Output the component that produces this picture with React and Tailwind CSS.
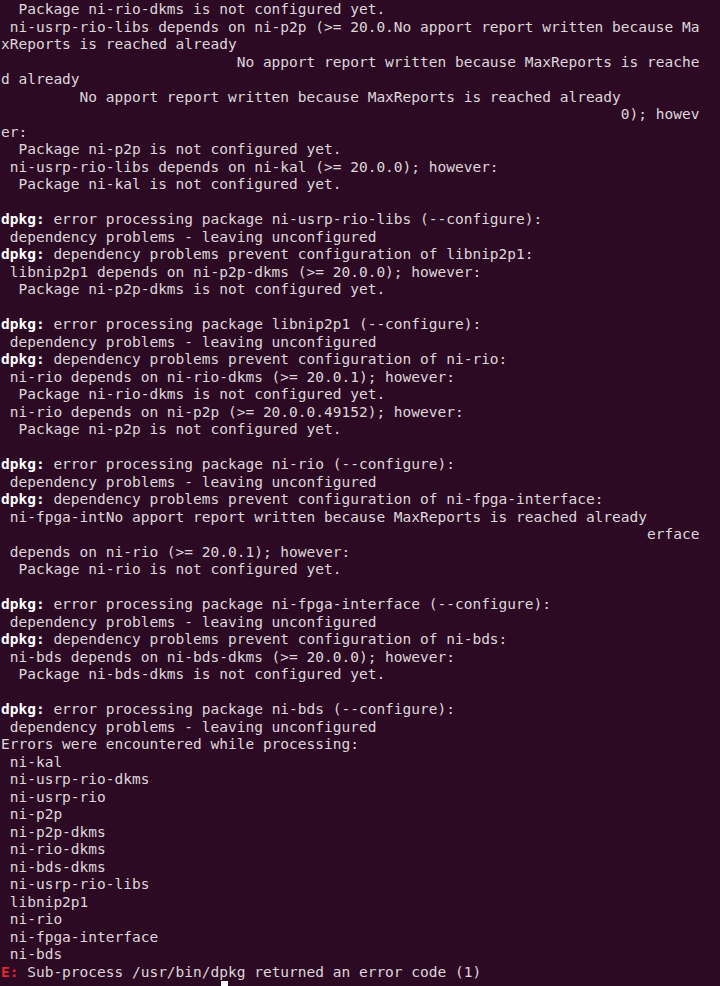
import React from 'react';

const LINES = [
  '  Package ni-rio-dkms is not configured yet.',
  ' ni-usrp-rio-libs depends on ni-p2p (>= 20.0.No apport report written because Ma',
  'xReports is reached already',
  '                           No apport report written because MaxReports is reache',
  'd already',
  '         No apport report written because MaxReports is reached already',
  '                                                                       0); howev',
  'er:',
  '  Package ni-p2p is not configured yet.',
  ' ni-usrp-rio-libs depends on ni-kal (>= 20.0.0); however:',
  '  Package ni-kal is not configured yet.',
  '',
  'dpkg: error processing package ni-usrp-rio-libs (--configure):',
  ' dependency problems - leaving unconfigured',
  'dpkg: dependency problems prevent configuration of libnip2p1:',
  ' libnip2p1 depends on ni-p2p-dkms (>= 20.0.0); however:',
  '  Package ni-p2p-dkms is not configured yet.',
  '',
  'dpkg: error processing package libnip2p1 (--configure):',
  ' dependency problems - leaving unconfigured',
  'dpkg: dependency problems prevent configuration of ni-rio:',
  ' ni-rio depends on ni-rio-dkms (>= 20.0.1); however:',
  '  Package ni-rio-dkms is not configured yet.',
  ' ni-rio depends on ni-p2p (>= 20.0.0.49152); however:',
  '  Package ni-p2p is not configured yet.',
  '',
  'dpkg: error processing package ni-rio (--configure):',
  ' dependency problems - leaving unconfigured',
  'dpkg: dependency problems prevent configuration of ni-fpga-interface:',
  ' ni-fpga-intNo apport report written because MaxReports is reached already',
  '                                                                          erface',
  ' depends on ni-rio (>= 20.0.1); however:',
  '  Package ni-rio is not configured yet.',
  '',
  'dpkg: error processing package ni-fpga-interface (--configure):',
  ' dependency problems - leaving unconfigured',
  'dpkg: dependency problems prevent configuration of ni-bds:',
  ' ni-bds depends on ni-bds-dkms (>= 20.0.0); however:',
  '  Package ni-bds-dkms is not configured yet.',
  '',
  'dpkg: error processing package ni-bds (--configure):',
  ' dependency problems - leaving unconfigured',
  'Errors were encountered while processing:',
  ' ni-kal',
  ' ni-usrp-rio-dkms',
  ' ni-usrp-rio',
  ' ni-p2p',
  ' ni-p2p-dkms',
  ' ni-rio-dkms',
  ' ni-bds-dkms',
  ' ni-usrp-rio-libs',
  ' libnip2p1',
  ' ni-rio',
  ' ni-fpga-interface',
  ' ni-bds',
];

const Line = ({ text }) => {
  if (text.startsWith('dpkg:')) {
    return (
      <div className="h-[17.5px]">
        <span className="font-bold text-white">dpkg:</span>
        {text.slice(5)}
      </div>
    );
  }
  return <div className="h-[17.5px]">{text}</div>;
};

const App = () => {
  return (
    <div className="relative w-[720px] h-[986px] overflow-hidden bg-[#2d0a24]">
      <div className="pt-[1px] pl-[1px] whitespace-pre text-[14.5px] leading-[17.5px] text-[#ddd6da] font-['DejaVu_Sans_Mono','Liberation_Mono',monospace]">
        {LINES.map((l, i) => (
          <Line key={i} text={l} />
        ))}
        <div className="h-[17.5px]">
          <span className="font-bold text-[#e0282e]">E:</span>
          {' Sub-process /usr/bin/dpkg returned an error code (1)'}
        </div>
      </div>
      {/* mouse pointer tip */}
      <div className="absolute left-[221px] top-[981px] w-[7px] h-[5px] bg-white" />
    </div>
  );
};

export default App;
